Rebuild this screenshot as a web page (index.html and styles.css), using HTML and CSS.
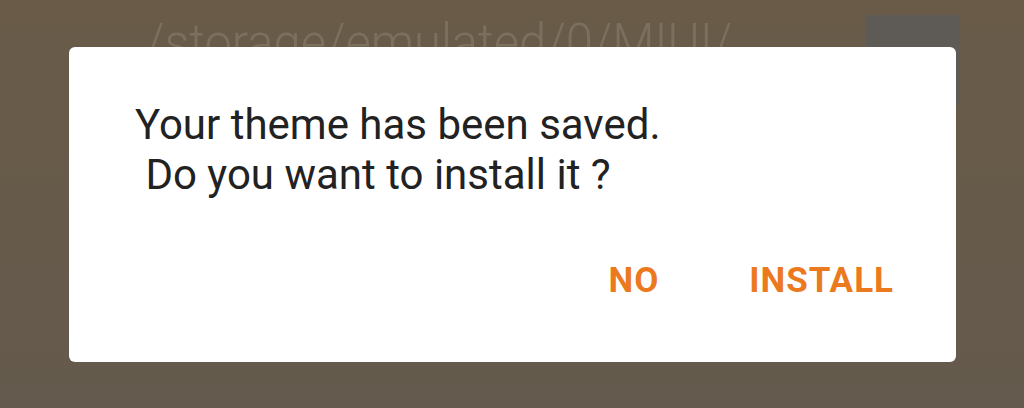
FILE: index.html
```html
<!DOCTYPE html>
<html>
<head>
  <title>Theme saved</title>
  <link rel="stylesheet" href="styles.css">
</head>
<body>
  <div class="screen">
    <div class="path-bar">
      <span class="path-text">/storage/emulated/0/MIUI/</span>
      <div class="path-button"></div>
    </div>
  </div>

  <div class="dialog">
    <p class="message">Your theme has been saved.
 Do you want to install it ?</p>
    <div class="actions">
      <button class="action">NO</button>
      <button class="action">INSTALL</button>
    </div>
  </div>
</body>
</html>
```

FILE: styles.css
```css
html, body {
  margin: 0;
  height: 100%;
}
body {
  background: linear-gradient(#695b48, #645a4d);
  font-family: Roboto, "Liberation Sans", sans-serif;
  overflow: hidden;
  position: relative;
}
.screen {
  padding: 15px 64px 0 145px;
}
.path-bar {
  display: flex;
  justify-content: space-between;
  align-items: flex-start;
}
.path-text {
  display: inline-block;
  font-weight: 300;
  font-size: 52px;
  line-height: 56px;
  color: #7c6f5e;
  transform: scaleX(0.94);
  transform-origin: left top;
  white-space: nowrap;
}
.path-button {
  width: 94px;
  height: 90px;
  background: #5e5a56;
}
.dialog {
  position: absolute;
  left: 69px;
  top: 47px;
  width: 887px;
  height: 315px;
  box-sizing: border-box;
  background: #fff;
  border-radius: 6px;
  padding: 53px 62px 0 66px;
  display: flex;
  flex-direction: column;
}
.message {
  margin: 0;
  font-size: 42px;
  line-height: 50px;
  color: #222;
  white-space: pre-wrap;
}
.actions {
  margin-top: 61px;
  display: flex;
  justify-content: flex-end;
  gap: 90px;
}
.action {
  border: 0;
  background: none;
  padding: 0;
  font-family: Roboto, "Liberation Sans", sans-serif;
  font-weight: 700;
  font-size: 35px;
  line-height: 40px;
  letter-spacing: 1px;
  color: #eb7a1f;
}
```
